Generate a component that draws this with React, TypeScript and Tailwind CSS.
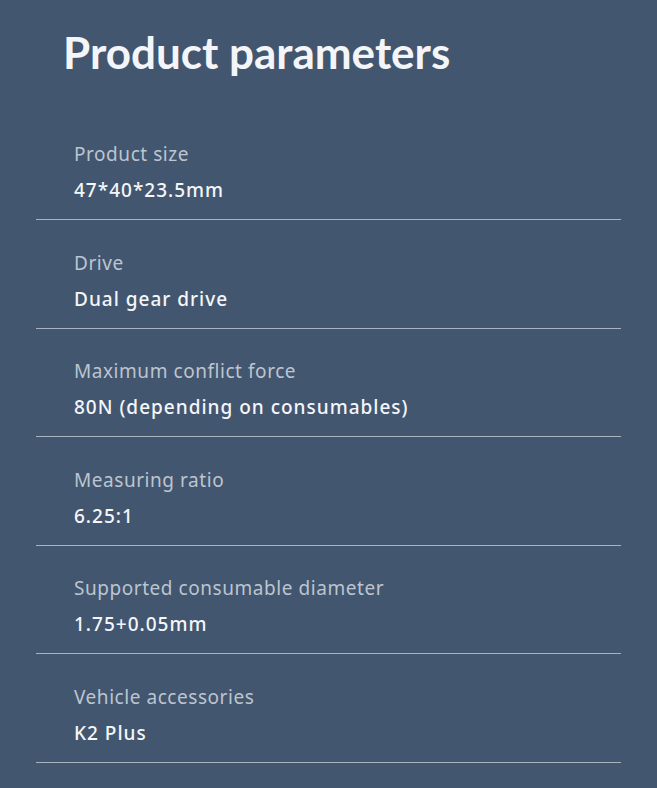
import React from 'react';

interface Param {
  label: string;
  value: string;
}

const params: Param[] = [
  { label: 'Product size', value: '47*40*23.5mm' },
  { label: 'Drive', value: 'Dual gear drive' },
  { label: 'Maximum conflict force', value: '80N (depending on consumables)' },
  { label: 'Measuring ratio', value: '6.25:1' },
  { label: 'Supported consumable diameter', value: '1.75+0.05mm' },
  { label: 'Vehicle accessories', value: 'K2 Plus' },
];

const ParamRow: React.FC<{ param: Param }> = ({ param }) => (
  <div className="border-b border-[#a9b4c1] pl-[38px] pt-[30.6px] pb-[17px]">
    <p className="text-[19px] leading-[24px] text-[#bcc5d0] tracking-[0.55px]">{param.label}</p>
    <p className="mt-[12px] text-[19px] leading-[24px] font-medium text-[#f4f6f9] tracking-[1px]">
      {param.value}
    </p>
  </div>
);

export default function App() {
  return (
    <div
      className="w-[657px] h-[788px] bg-[#43566f] overflow-hidden px-[36px]"
      style={{ fontFamily: '"Noto Sans", sans-serif' }}
    >
      <div className="h-[111.5px] pl-[27px] pt-[24px]">
        <h1
          className="text-[44px] leading-[56px] font-bold text-[#f3f5f8]"
          style={{ fontFamily: 'Lato, sans-serif' }}
        >
          Product parameters
        </h1>
      </div>
      <div className="w-[585px]">
        {params.map((p) => (
          <ParamRow key={p.label} param={p} />
        ))}
      </div>
    </div>
  );
}
